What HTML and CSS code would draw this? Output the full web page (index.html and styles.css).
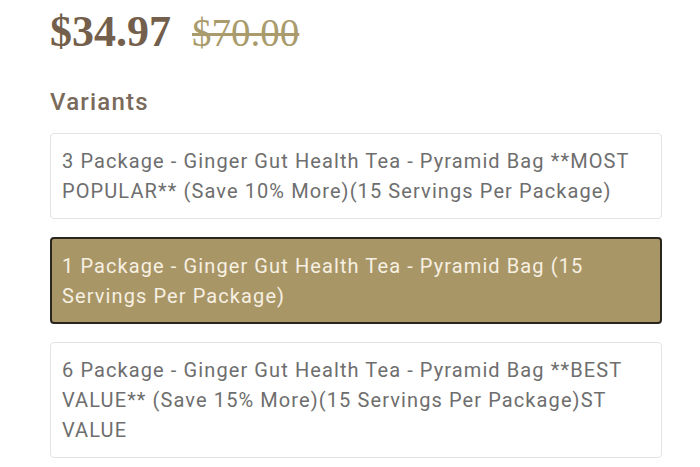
FILE: index.html
```html
<!DOCTYPE html>
<html lang="en">
<head>
    <meta charset="UTF-8">
    <meta name="viewport" content="width=device-width, initial-scale=1.0">
    <title>Ginger Gut Health Tea</title>
    <link rel="stylesheet" href="styles.css">
</head>
<body>
    <div class="product">
        <div class="price-row">
            <span class="price">$34.97</span>
            <span class="price-old">$70.00</span>
        </div>

        <h2 class="variants-title">Variants</h2>

        <div class="variant-list">
            <div class="variant">
                3 Package - Ginger Gut Health Tea - Pyramid Bag **MOST POPULAR** (Save 10% More)(15 Servings Per Package)
            </div>
            <div class="variant selected">
                1 Package - Ginger Gut Health Tea - Pyramid Bag (15 Servings Per Package)
            </div>
            <div class="variant">
                6 Package - Ginger Gut Health Tea - Pyramid Bag **BEST VALUE** (Save 15% More)(15 Servings Per Package)ST VALUE
            </div>
        </div>
    </div>
</body>
</html>
```

FILE: styles.css
```css
body {
    margin: 0;
    background-color: #fff;
    font-family: Roboto, "Liberation Sans", sans-serif;
}
.product {
    width: 612px;
    padding: 6px 0 0 50px;
}
.price-row {
    display: flex;
    align-items: baseline;
    gap: 21px;
    height: 52px;
}
.price {
    font-family: "Liberation Serif", serif;
    font-weight: bold;
    font-size: 44px;
    color: #735f4c;
}
.price-old {
    font-family: "Liberation Serif", serif;
    font-size: 39px;
    color: #a99b6b;
    text-decoration: line-through;
    text-decoration-thickness: 3px;
}
.variants-title {
    margin: 30px 0 17px;
    font-size: 24px;
    font-weight: 500;
    color: #7a6a5b;
    letter-spacing: 1.2px;
}
.variant {
    margin-bottom: 18px;
    padding: 12px 11px;
    border: 1px solid #e3e3e3;
    border-radius: 4px;
    font-size: 20px;
    line-height: 30px;
    color: #6e6e6e;
    letter-spacing: 1.1px;
}
.variant.selected {
    padding: 12px 10px 11px;
    background-color: #a99667;
    border: 2px solid #2a251f;
    color: #f6f0e2;
}
```
